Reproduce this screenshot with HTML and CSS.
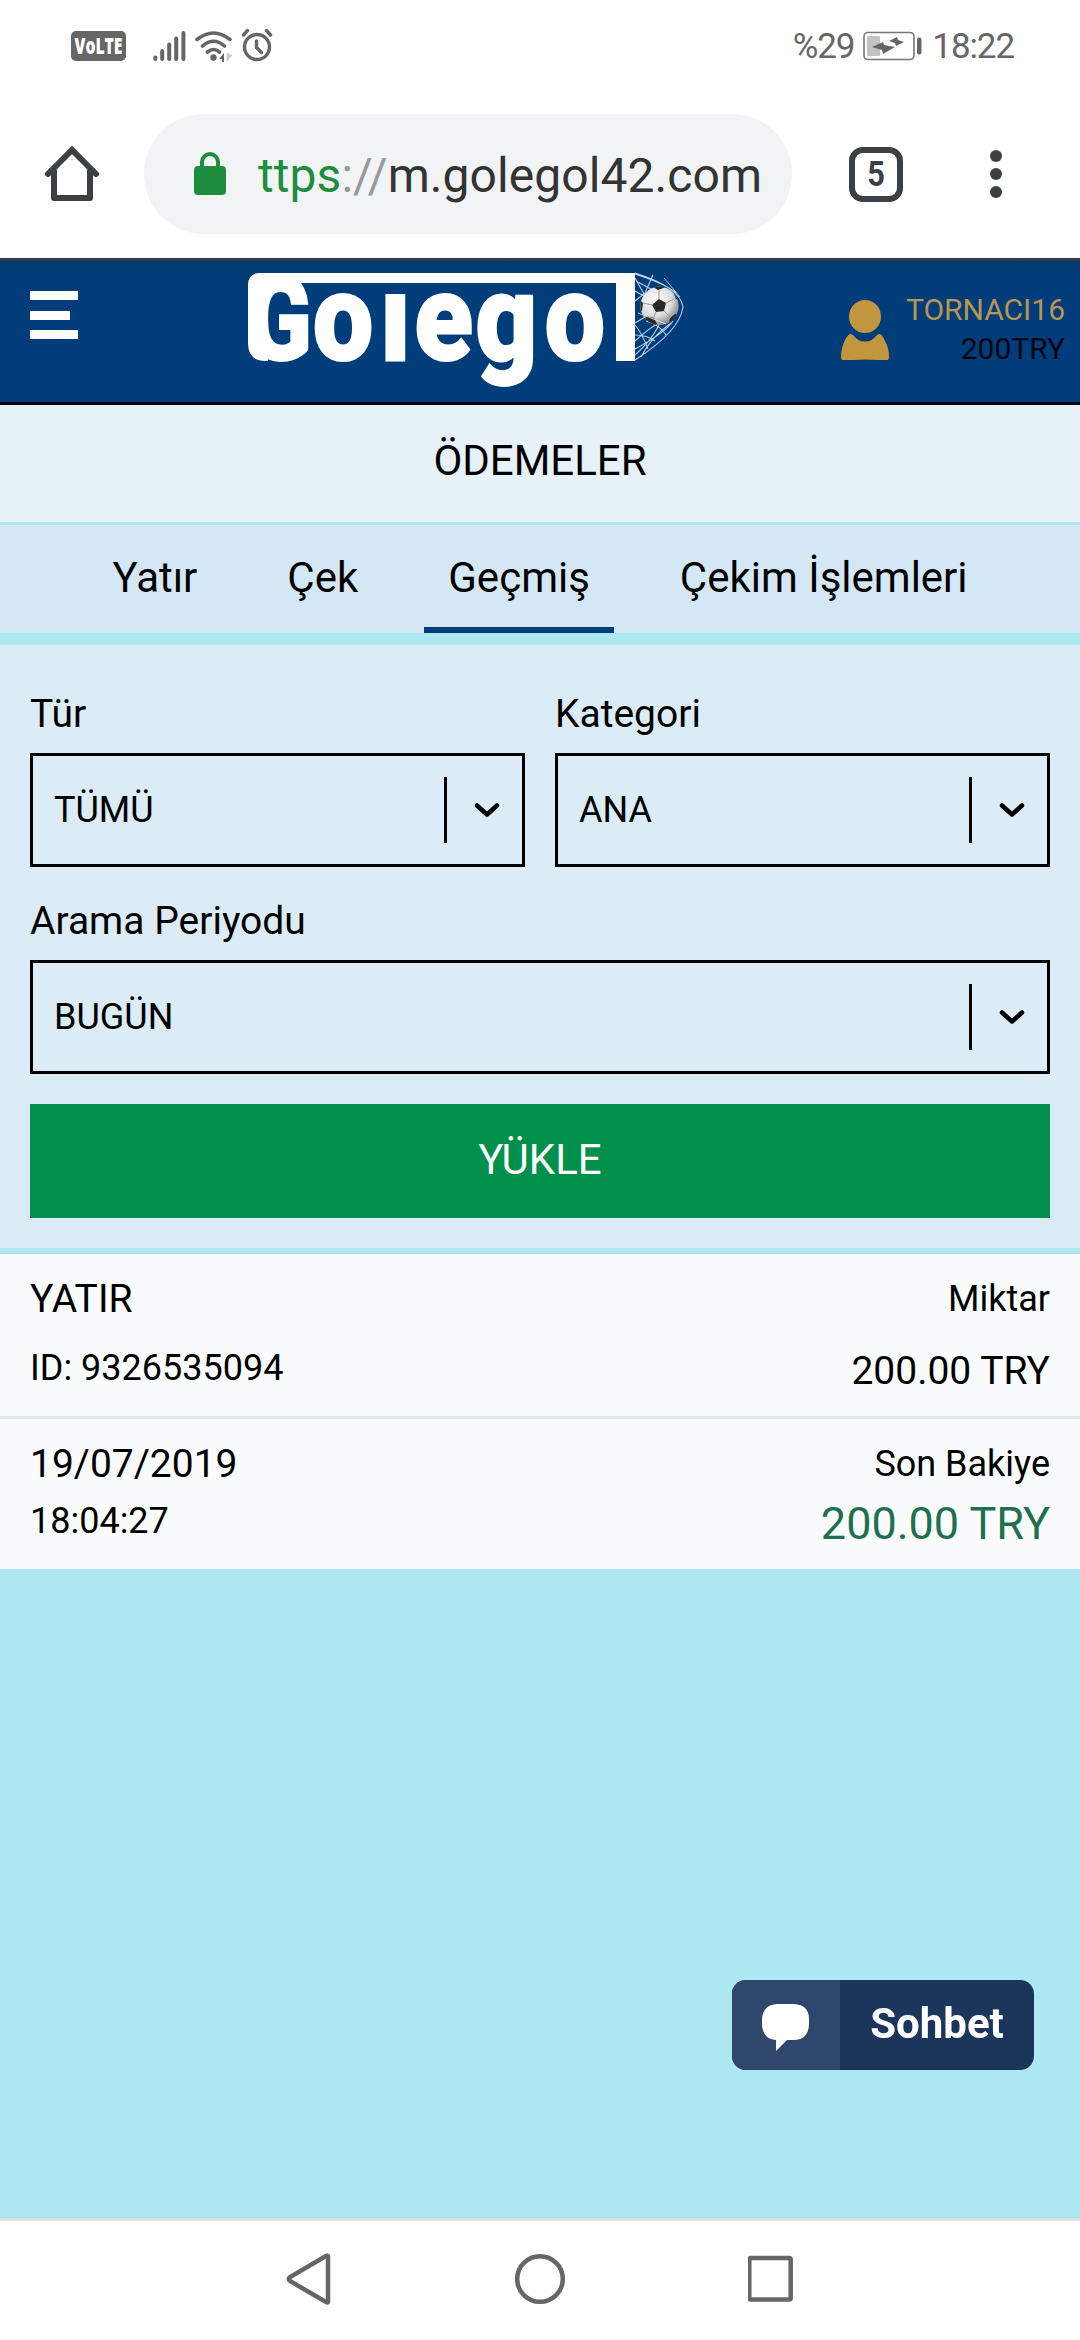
FILE: index.html
```
<!DOCTYPE html>
<html lang="tr">
<head>
  <meta charset="UTF-8">
  <meta name="viewport" content="width=device-width, initial-scale=1.0">
  <title>Ödemeler</title>
  <link rel="stylesheet" href="styles.css">
</head>
<body>

  <!-- Status bar -->
  <div class="status-bar">
    <svg class="volte" width="55" height="30"><text x="3.500" y="23" textLength="48" lengthAdjust="spacingAndGlyphs">VoLTE</text></svg>
    <svg class="signal" width="34" height="32" viewBox="0 0 34 32" stroke="#666" stroke-width="4" stroke-linecap="round">
      <path d="M2.3 27.5v1.5M9.2 21v8M16.2 14.5v14.5M23.2 8.5v20.5M30.4 3v26"/>
    </svg>
    <svg class="wifi" width="38" height="32" viewBox="0 0 38 32" fill="none" stroke="#666" stroke-width="3.6" stroke-linecap="round">
      <path d="M2 9.500Q18.500-3.500 35 9.500M7.500 16Q18.500 6.500 29.500 16M12.500 22Q18.500 17 24.500 22"/>
      <circle cx="18.500" cy="27.500" r="3.200" fill="#666" stroke="none"/>
      <path d="M29 23v9h-2v-3h-3z" fill="#666" stroke="none"/>
      <path d="M31.500 23v9l6-7z" fill="#ccc" stroke="none"/>
    </svg>
    <svg class="alarm" width="32" height="34" viewBox="0 0 32 34" fill="none" stroke="#666" stroke-width="3.400" stroke-linecap="round">
      <circle cx="16" cy="19" r="12.500"/>
      <path d="M15.500 13v6.500l5 5M2.500 7l4-4.500M29.500 7l-4-4.500"/>
    </svg>
    <span class="battery-text">%29</span>
    <svg class="battery" width="60" height="30" viewBox="0 0 60 30">
      <rect x="1" y="1.500" width="50" height="27" rx="4" fill="none" stroke="#777" stroke-width="1.600"/>
      <rect x="4" y="5" width="13" height="20" rx="1" fill="#c3c3c3"/>
      <path d="M9 16l11-5 1 3 11 2-12 7-1-4z" fill="#666"/>
      <path d="M26 10l8-4 1 3 6 2-8 4-1-3z" fill="#666"/>
      <rect x="54" y="6.500" width="4.500" height="17" rx="2" fill="#666"/>
    </svg>
    <span class="time">18:22</span>
  </div>

  <!-- Browser toolbar -->
  <div class="toolbar">
    <svg class="home" width="54" height="56" viewBox="0 0 54 56" fill="none" stroke="#3c4043" stroke-width="6" stroke-linecap="round" stroke-linejoin="round">
      <path d="M3 28L27 4l24 24" stroke-linejoin="miter"/>
      <path d="M9 25v27h36V25"/>
    </svg>
    <div class="url-bar">
      <svg class="lock" width="32" height="43" viewBox="0 0 32 43">
        <rect y="14" width="32" height="29" rx="4" fill="#1e8e3e"/>
        <path d="M8 16v-6a8 8 0 0 1 16 0v6" fill="none" stroke="#1e8e3e" stroke-width="4"/>
      </svg>
      <span class="url"><span class="scheme">ttps</span><span class="slashes">://</span>m.golegol42.com</span>
    </div>
    <div class="tab-count"><span>5</span></div>
    <div class="dots"><i></i><i></i><i></i></div>
  </div>

  <!-- Site header -->
  <header class="header">
    <div class="menu"><i></i><i></i><i></i></div>
    <svg class="logo" width="436" height="116" viewBox="0 0 436 116">
      <g class="logo-text" transform="translate(0 87) scale(1.08 1.22)">
        <text class="cap" x="-1" textLength="60" lengthAdjust="spacingAndGlyphs">G</text>
        <text x="60">o</text>
        <text class="short" x="123" textLength="27" lengthAdjust="spacingAndGlyphs">l</text>
        <text x="154 210.500 274.500">ego</text>
        <text class="tall" x="336.500" textLength="27" lengthAdjust="spacingAndGlyphs">l</text>
      </g>
      <!-- goal frame -->
      <path d="M0 70V12Q0 0 12 0H387V88H368V10H24Q20 10 20 14V88H18Q0 88 0 70z" fill="#fff"/>
      <g fill="none" stroke="#b9cfe6" stroke-width="1.100">
        <path d="M387 0Q432 14 435 34Q432 58 387 87M387 1Q420 12 428 20M388 8l26 14M387 18l14 8M387 28l10-8 8-18M387 5l14 25M387 50l20-12M387 68q24-22 40-24M387 76q30-16 38-28M387 82q16-14 24-30M387 62q12 0 20 6M400 76q-6-16-13-24M418 62q-6-10-20-14M393 84q10-20 30-34"/>
      </g>
      <defs>
        <radialGradient id="ball" cx=".4" cy=".35" r=".7">
          <stop offset="0" stop-color="#fff"/>
          <stop offset=".6" stop-color="#dedede"/>
          <stop offset="1" stop-color="#777"/>
        </radialGradient>
        <clipPath id="ballClip"><circle cx="411.500" cy="33" r="19.200"/></clipPath>
      </defs>
      <circle cx="411.500" cy="33" r="19.200" fill="url(#ball)"/>
      <g clip-path="url(#ballClip)" fill="#292929">
        <path d="M411 26l7 4-2 8-8 1-4-7zM403 13l7 4 8-3-3-4h-10zM425 18l3 8 6 3V18zM391 26l4 4-1 8-5-2zM398 43l8 2 3 6-5 4-8-6zM422 45l5-4 5 2-7 10-4-2z"/>
        <path d="M411 26v-9M418 30l8-4M416 38l7 7M408 39l-3 7M404 32l-9-2" stroke="#999" fill="none"/>
      </g>
      <path d="M390 40l28 11M416 5l16 19" stroke="#dbe6f0" stroke-width=".8" fill="none"/>
    </svg>
    <div class="user">
      <svg width="48" height="60" viewBox="0 0 48 60" fill="#c1963f">
        <ellipse cx="24" cy="16.500" rx="16" ry="16.500"/>
        <path d="M9.500 34Q11.500 34 13 36Q17 41.500 24 41.500T35 36Q36.500 34 38.500 34Q41 34 44 41Q48 48 48 57Q48 61 44 61Q24 58 4 61Q0 61 0 57Q0 48 4.500 39Q7.500 34 9.500 34Z"/>
      </svg>
      <div class="user-info">
        <div class="user-name">TORNACI16</div>
        <div class="user-balance">200TRY</div>
      </div>
    </div>
  </header>

  <h1 class="page-title">ÖDEMELER</h1>

  <nav class="tabs">
    <a class="tab">Yatır</a>
    <a class="tab">Çek</a>
    <a class="tab active">Geçmiş</a>
    <a class="tab">Çekim İşlemleri</a>
  </nav>

  <!-- Filters -->
  <div class="filters">
    <div class="filter-row">
      <div class="field">
        <label>Tür</label>
        <div class="select">
          <span class="value">TÜMÜ</span>
          <svg class="arrow" width="26" height="16" viewBox="0 0 26 16"><path d="M3 3.500l10 9 10-9"/></svg>
        </div>
      </div>
      <div class="field">
        <label>Kategori</label>
        <div class="select">
          <span class="value">ANA</span>
          <svg class="arrow" width="26" height="16" viewBox="0 0 26 16"><path d="M3 3.500l10 9 10-9"/></svg>
        </div>
      </div>
    </div>
    <div class="field">
      <label>Arama Periyodu</label>
      <div class="select">
        <span class="value">BUGÜN</span>
        <svg class="arrow" width="26" height="16" viewBox="0 0 26 16"><path d="M3 3.500l10 9 10-9"/></svg>
      </div>
    </div>
    <button class="load-button">YÜKLE</button>
  </div>

  <!-- Transaction -->
  <div class="transaction">
    <div class="row row-amount">
      <div>
        <div class="large">YATIR</div>
        <div class="second">ID: 9326535094</div>
      </div>
      <div class="right">
        <div>Miktar</div>
        <div class="second large">200.00 TRY</div>
      </div>
    </div>
    <div class="row row-balance">
      <div>
        <div class="large">19/07/2019</div>
        <div class="second">18:04:27</div>
      </div>
      <div class="right">
        <div>Son Bakiye</div>
        <div class="second balance">200.00 TRY</div>
      </div>
    </div>
  </div>

  <!-- Live chat -->
  <div class="chat">
    <div class="chat-icon">
      <svg width="47" height="47" viewBox="0 0 47 47"><path d="M15 0H32Q47 1 47 15V21Q46 35 33 36H25L14 47V36Q1 35 0 21V15Q1 1 15 0Z" fill="#fff"/></svg>
    </div>
    <div class="chat-label">Sohbet</div>
  </div>

  <!-- Android navigation -->
  <div class="nav-bar">
    <svg width="46" height="52" viewBox="0 0 46 52"><path d="M42 3.500V48.500Q42 50 40 49L4 28Q1.500 26 4 24L40 3Q42 2 42 3.500Z"/></svg>
    <svg width="50" height="52" viewBox="0 0 50 52"><circle cx="25" cy="26" r="22.800"/></svg>
    <svg width="46" height="52" viewBox="0 0 46 52"><rect x="1.300" y="5" width="41.400" height="41.400" rx="1.500"/></svg>
  </div>

</body>
</html>
```
FILE: styles.css
```
* {
  margin: 0;
  padding: 0;
  box-sizing: border-box;
}

body {
  font-family: Roboto, "Liberation Sans", sans-serif;
  background: #ade7f2;
  width: 1080px;
  height: 2340px;
  display: flex;
  flex-direction: column;
  color: #000;
  overflow: hidden;
}

svg {
  display: block;
  flex: none;
}

/* Status bar */
.status-bar {
  height: 90px;
  padding: 2px 66px 0 71px;
  display: flex;
  align-items: center;
  background: #fefefe;
  color: #666;
  font-size: 35px;
  letter-spacing: -1.1px;
}

.volte {
  border-radius: 5px;
  background: #666;
  overflow: visible;
}

.volte text {
  font-family: "Open Sans", sans-serif;
  font-weight: 800;
  font-size: 22px;
  letter-spacing: 0;
  fill: #fff;
}

.signal {
  margin-left: 27px;
}

.wifi {
  margin-left: 8px;
}

.alarm {
  margin-left: 8px;
  margin-bottom: 3px;
}

.battery-text {
  margin-left: auto;
}

.battery {
  margin-left: 9px;
  margin-right: 1px;
}

.time {
  margin-left: 8px;
}

/* Browser toolbar */
.toolbar {
  height: 168px;
  display: flex;
  align-items: center;
  padding-left: 45px;
  background: #fefefe;
}

.url-bar {
  width: 648px;
  height: 120px;
  margin-left: 45px;
  padding-left: 50px;
  border-radius: 60px;
  background: #f1f3f4;
  display: flex;
  align-items: center;
}

.lock {
  margin-bottom: 2px;
}

.url {
  margin-left: 32px;
  padding-top: 3px;
  font-size: 48px;
  letter-spacing: 0.07px;
  color: #333;
  white-space: nowrap;
}

.scheme {
  color: #1e8e3e;
}

.slashes {
  color: #999;
}

.tab-count {
  width: 54px;
  height: 55px;
  margin-left: 57px;
  border: 6px solid #3c4043;
  border-radius: 14px;
  color: #3c4043;
  font-size: 35px;
  font-weight: 700;
  line-height: 43px;
  text-align: center;
}

.tab-count span {
  display: inline-block;
  transform: scaleX(.88);
}

.dots {
  margin-left: 87px;
  display: flex;
  flex-direction: column;
  gap: 6px;
}

.dots i {
  width: 12px;
  height: 12px;
  border-radius: 50%;
  background: #3c4043;
}

/* Site header */
.header {
  height: 147px;
  border-top: 3px solid #2c3b4e;
  border-bottom: 3px solid #000;
  background: linear-gradient(#033b72, #003d7a 30px);
  display: flex;
  align-items: flex-start;
  padding: 12px 15px 0 30px;
}

.menu {
  width: 48px;
  margin-top: 18px;
  display: flex;
  flex-direction: column;
  gap: 10.5px;
}

.menu i {
  height: 9px;
  background: #fff;
}

.menu i:nth-child(2) {
  width: 40px;
}

.logo {
  margin-left: 170px;
  overflow: visible;
}

.logo-text {
  font-size: 100px;
  font-weight: 900;
  fill: #fff;
  stroke: #fff;
  stroke-width: 1.5;
}

.logo-text .cap {
  font-size: 96px;
}

.logo-text .short {
  font-size: 72px;
}

.logo-text .tall {
  font-size: 90px;
  stroke: none;
}

.user {
  margin: 17px 0 0 auto;
  display: flex;
}

.user svg {
  margin: 10px 17px 0 0;
}

.user-info {
  text-align: right;
  font-size: 30px;
  line-height: 39px;
}

.user-name {
  color: #b8964f;
}

.user-balance {
  color: #00050f;
}

/* Title and tabs */
.page-title {
  height: 120px;
  padding-bottom: 5px;
  border-bottom: 3px solid #b3e5f0;
  background: #e7f2f8;
  font-size: 42px;
  font-weight: 400;
  line-height: 112px;
  text-align: center;
}

.tabs {
  height: 120px;
  border-bottom: 12px solid #ade7f2;
  background: #d4e7f5;
  display: flex;
  justify-content: center;
  gap: 42px;
}

.tab {
  padding: 3px 24px 0;
  font-size: 42px;
  line-height: 99px;
  border-bottom: 6px solid transparent;
}

.tab.active {
  border-color: #003d7a;
}

/* Filters */
.filters {
  padding: 15px 30px 30px;
  background: #dbecf6;
}

.filter-row {
  display: grid;
  grid-template-columns: 1fr 1fr;
  gap: 30px;
}

.field label {
  display: block;
  padding: 31px 0 15px;
  font-size: 39px;
  line-height: 47px;
}

.select {
  height: 114px;
  border: 3px solid #000;
  padding: 0 22px 0 21px;
  display: flex;
  align-items: center;
  justify-content: space-between;
  font-size: 36px;
}

.arrow {
  box-sizing: content-box;
  padding: 25px 0 25px 27px;
  border-left: 3px solid #000;
  fill: none;
  stroke: #000;
  stroke-width: 4.5;
  stroke-linecap: round;
  stroke-linejoin: round;
}

.load-button {
  display: block;
  width: 100%;
  height: 114px;
  margin-top: 30px;
  padding-bottom: 3px;
  border: none;
  background: #00904c;
  color: #fff;
  font-family: inherit;
  font-size: 42px;
}

/* Transaction */
.transaction {
  margin-top: 6px;
  background: #fafbfd;
  font-size: 36px;
  line-height: 46px;
}

.row {
  display: flex;
  justify-content: space-between;
  padding: 22px 30px 0;
}

.right {
  text-align: right;
}

.large {
  font-size: 39px;
}

.row-amount {
  height: 165px;
  border-bottom: 3px solid #d6e7f0;
}

.row-amount .second {
  margin-top: 23px;
}

.row-amount .right .second {
  margin-top: 26px;
}

.row-balance {
  height: 150px;
}

.row-balance .second {
  margin-top: 11px;
}

.row-balance .balance {
  margin-top: 14px;
  font-size: 45px;
  color: #20704f;
}

/* Live chat */
.chat {
  position: fixed;
  left: 732px;
  top: 1980px;
  width: 302px;
  height: 90px;
  border-radius: 14px;
  overflow: hidden;
  display: flex;
  background: #1b355b;
}

.chat-icon {
  width: 108px;
  padding: 24px 0 0 30px;
  background: #2f466d;
}

.chat-label {
  flex: 1;
  color: #fff;
  font-size: 42px;
  font-weight: 700;
  line-height: 87px;
  text-align: center;
}

/* Android navigation */
.nav-bar {
  height: 122px;
  margin-top: auto;
  border-top: 3px solid #e0e0e0;
  background: #fefefe;
  display: flex;
  justify-content: center;
  gap: 183px;
  padding-top: 32px;
}

.nav-bar svg {
  fill: none;
  stroke: #666;
  stroke-width: 4.5;
}
```
